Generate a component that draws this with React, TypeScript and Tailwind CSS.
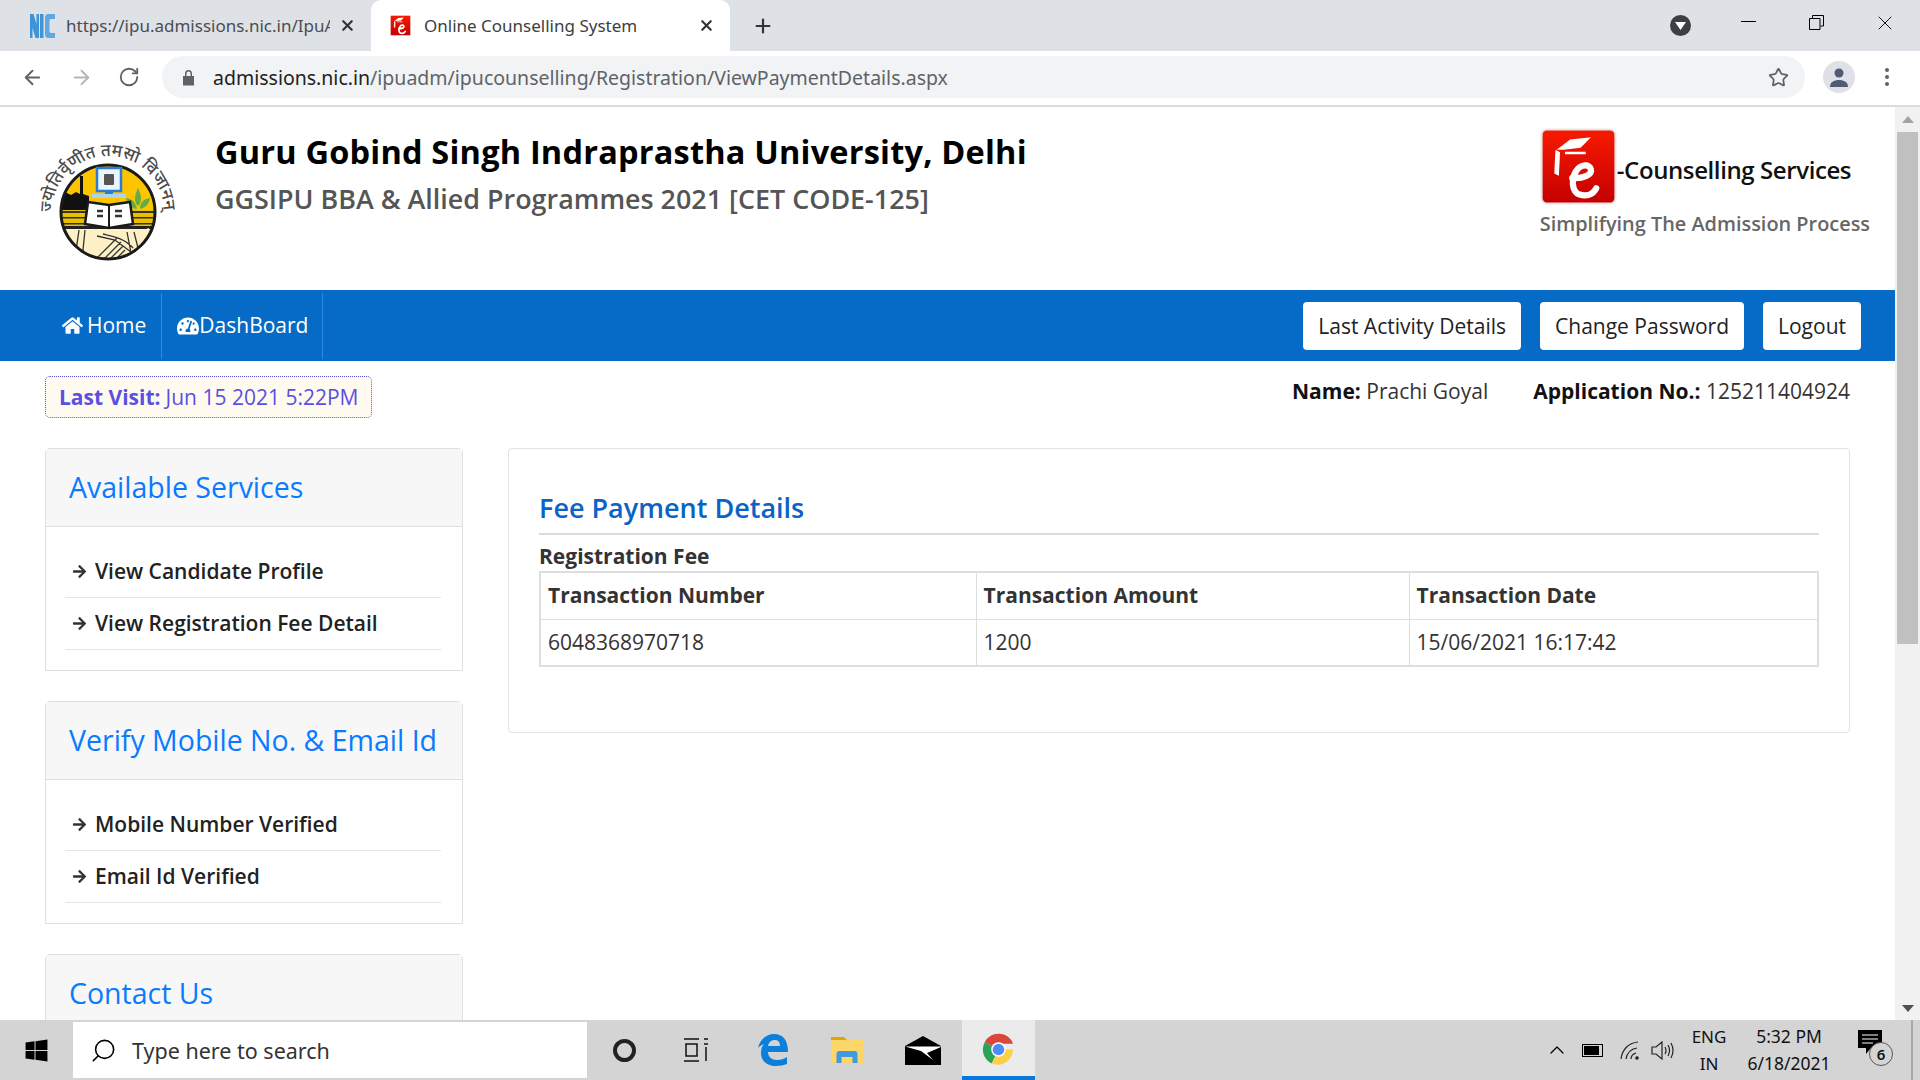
import { ArrowLeft, ArrowRight, ChevronUp, Plus, RotateCw, Search, Star, X } from "lucide-react"
import { FaArrowRight, FaHome, FaTachometerAlt, FaWindows } from "react-icons/fa"

const EmblemLogo = () => (
  <svg width="140" height="124" viewBox="0 0 140 124" className="shrink-0">
    <defs>
      <path id="motto" d="M 13 72 A 56 56 0 0 1 125 72" />
      <clipPath id="disc">
        <circle cx="69" cy="72" r="47" />
      </clipPath>
    </defs>
    <text fontSize="17" fontWeight="500" fill="#4a4a4a" fontFamily="'Noto Sans', sans-serif">
      <textPath href="#motto" textLength="174">
        ज्योतिर्वृणीत तमसो विजानन्
      </textPath>
    </text>
    <g clipPath="url(#disc)">
      <rect x="20" y="20" width="100" height="50" fill="#fcc500" />
      <rect x="20" y="70" width="100" height="54" fill="#fdf0c4" />
      <path d="M20 72V55l6-3 6 3 5-3 4 2V36h3v18l6 2v16z" fill="#111" />
      <path d="M20 70h100v18H20z" fill="#e8c000" />
      <path d="M20 71h100v2H20zM20 77h100v1.500H20zM20 83h100v1.500H20z" fill="#333" />
      <path d="M20 86h100v3H20z" fill="#222" />
      <path d="M99 66c-4-4-4-10 0-18 4 8 4 14 0 18z" fill="#63ad44" />
      <path d="M98 69c-7-1-10-5-11-11 7 1 10 5 11 11zM100 69c7-1 10-5 11-11-7 1-10 5-10 11z" fill="#63ad44" />
      <path d="M30 93l20-3 8 6 14-6 20 4 18-6v36H28z" fill="#fdf0c4" />
      <path d="M40 90l-4 28M46 90l-3 30M95 92l6 24M88 92l5 26M58 96l18 4 16 12M64 94c8 2 22 4 30 14M56 120l22-22M62 122l20-20M68 122l16-16M74 122l12-12" stroke="#333" strokeWidth="1.300" fill="none" />
    </g>
    <circle cx="69" cy="72" r="47" fill="none" stroke="#1a1a1a" strokeWidth="3" />
    <rect x="58" y="28" width="24" height="23" fill="#eaf4fc" stroke="#2c7dd0" strokeWidth="2.500" />
    <rect x="65" y="34" width="10" height="11" rx="1" fill="#555" />
    <path d="M66 51h8v3h-8z" fill="#2c7dd0" />
    <path d="M53 54h34v4H53z" fill="#a9d4f5" />
    <path d="M49 62l21 3 21-3 3 22-24 4-24-4z" fill="#fff" stroke="#1a1a1a" strokeWidth="2.500" />
    <path d="M70 65v23" stroke="#1a1a1a" strokeWidth="2" />
    <path d="M58 71h6M58 76h6M76 71h7M76 76h7" stroke="#333" strokeWidth="2.500" />
  </svg>
)

const ELogo = ({ size }: { size: number }) => (
  <svg width={size} height={size} viewBox="0 0 74 74" className="shrink-0">
    <defs>
      <linearGradient id={`red${size}`} x1="0" y1="0" x2="0" y2="1">
        <stop offset="0" stopColor="#f81a00" />
        <stop offset="1" stopColor="#c40000" />
      </linearGradient>
    </defs>
    <rect x="1.500" y="1.500" width="71" height="71" rx="5" fill={`url(#red${size})`} stroke="#e6e6e6" strokeWidth="2" />
    <path d="M16 21 29 11l20-2-10 10-16 2z" fill="#fff" />
    <path d="M16 23l2 1-1 20-2-1zM24 24h20" stroke="#fff" strokeWidth="2.500" fill="#fff" />
    <path d="M31 48c10 1 19-3 18-8-1-6-10-5-14 1-5 7-5 20 3 23 7 2 13 0 16-6" stroke="#fff" strokeWidth="6" fill="none" strokeLinecap="round" />
  </svg>
)

const NicIcon = () => (
  <svg width="25" height="24" viewBox="0 0 25 24" className="shrink-0 blur-[0.5px]">
    <path d="M0 0h3.500l3 10V0H9v24H5.500l-3-10v10H0zM10 0h3.500v24H10z" fill="#3f93d8" />
    <path d="M25 5V0h-6c-3.500 0-4 2-4 5v14c0 3 .5 5 4 5h6v-5h-4c-1 0-1.500-1-1.500-2V7c0-1 .5-2 1.500-2z" fill="#5fa9e2" />
  </svg>
)

const EdgeIcon = () => (
  <svg width="30" height="32" viewBox="0 0 30 32">
    <path
      fillRule="evenodd"
      d="M0 14C2 5 9 0 16 0c9 0 14 6 14 18H10c0 5 4 8 9 8 4 0 7-1 10-3v7c-3 1-7 2-11 2-9 0-15-5-15-13 0-4 1-7 3-9-3 1-5 3-6 4zM10 12h12c0-4-2-6-5-6-4 0-6 2-7 6z"
      fill="#0a7fdc"
    />
  </svg>
)

const ChromeIcon = () => (
  <svg width="33" height="33" viewBox="0 0 34 34">
    <path d="M17 17 2.800 9.500A16 16 0 0 1 32 11H17z" fill="#d9483b" />
    <path d="M17 17 10 31.500A16 16 0 0 1 2.800 9.500z" fill="#2aa25a" />
    <path d="M17 17h15a16 16 0 0 1-22 14.500z" fill="#fbcf46" />
    <circle cx="17" cy="17" r="7.500" fill="#fff" />
    <circle cx="17" cy="17" r="6" fill="#4d8cf5" />
  </svg>
)

const FolderIcon = () => (
  <svg width="32" height="26" viewBox="0 0 32 26">
    <path d="M0 0h13l3 3v3H0z" fill="#e2a400" />
    <path d="M0 3h32v23H0z" fill="#fcd56b" />
    <path d="M5.500 26V17q0-3 3-3h15q3 0 3 3v9h-5v-6h-11v6z" fill="#3f9ae0" />
  </svg>
)

const MailIcon = () => (
  <svg width="36" height="29" viewBox="0 0 36 29">
    <path d="M0 10 18 0l18 10v19H0z" fill="#000" />
    <path d="M0 10.500h36v.5L22 17l6 7-12-9z" fill="#fff" />
  </svg>
)

const ServiceCard = ({ title, items }: { title: string; items: string[] }) => (
  <div className="rounded-t-[5px] border border-[#dfdfdf] bg-white">
    <div className="flex h-[78px] items-center border-b border-[#dfdfdf] bg-[#f7f7f7] pl-[23px] text-[28.500px] text-[#0a7bff]">
      {title}
    </div>
    {items.length > 0 && (
      <ul className="pl-[19px] pr-[21px] pb-[20px] pt-[19px]">
        {items.map((item) => (
          <li key={item} className="flex h-[52px] items-center gap-[8px] border-b border-[#e4e4e4] pl-[7px] text-[21px] font-semibold text-[#222]">
            <FaArrowRight className="text-[15px] text-[#333]" />
            {item}
          </li>
        ))}
      </ul>
    )}
  </div>
)

const Cell = ({ children, head }: { children: string; head?: boolean }) => {
  const Tag = head ? "th" : "td"
  return (
    <Tag className={`border border-[#dedede] px-[7px] text-left text-[21px] text-[#333] ${head ? "font-bold" : "font-normal"}`}>
      {children}
    </Tag>
  )
}

const NavButton = ({ label }: { label: string }) => (
  <button className="flex h-[48px] items-center rounded-[4px] bg-white px-[15px] pt-[2px] text-[21px] text-[#222]">{label}</button>
)

export default function App() {
  return (
    <div className="flex h-screen flex-col overflow-hidden bg-white font-['Open_Sans',sans-serif]">
      {/* Browser tabs */}
      <div className="flex h-[51px] shrink-0 items-end bg-[#dee1e6] font-['Noto_Sans',sans-serif] text-[17px] text-[#3c4043]">
        <div className="flex h-[51px] w-[371px] items-center pl-[30px]">
          <NicIcon />
          <span className="ml-[11px] w-[264px] overflow-hidden whitespace-nowrap text-[#4a4d51]">https://ipu.admissions.nic.in/IpuA</span>
          <X size={17} strokeWidth={3} className="ml-[9px] text-[#333]" />
        </div>
        <div className="flex h-[51px] w-[359px] items-center rounded-t-[10px] bg-white pl-[19px]">
          <ELogo size={21} />
          <span className="ml-[13px] w-[274px]">Online Counselling System</span>
          <X size={17} strokeWidth={3} className="text-[#333]" />
        </div>
        <div className="flex h-[51px] items-center pl-[22px]">
          <Plus size={22} strokeWidth={2.4} className="text-[#333]" />
        </div>
        <div className="flex h-[51px] flex-1 items-center justify-end pr-[23px]">
          <div className="flex h-[21px] w-[21px] items-center justify-center rounded-full bg-[#3c4043]">
            <svg width="11" height="8" viewBox="0 0 11 8"><path d="M0 0h11L5.500 8z" fill="#fff" /></svg>
          </div>
          <div className="ml-[50px] h-[1.500px] w-[15px] -translate-y-[4px] bg-black" />
          <svg width="15" height="15" viewBox="0 0 15 15" className="ml-[53px] -translate-y-[3px]" fill="none" stroke="#000">
            <path d="M.5 3.500h10.500v11H.5zM3.500 3.500V.5h11v10.500h-3" />
          </svg>
          <X size={24} strokeWidth={0.9} className="ml-[49px] -translate-y-[3px] text-black" />
        </div>
      </div>

      {/* Address bar */}
      <div className="flex h-[56px] shrink-0 items-center border-b-2 border-[#dadce0] bg-white pb-[2px] pl-[21px]">
        <ArrowLeft size={23} strokeWidth={2} className="text-[#5f6368]" />
        <ArrowRight size={23} strokeWidth={2} className="ml-[26px] text-[#b4b6b9]" />
        <RotateCw size={22} strokeWidth={2} className="ml-[25px] text-[#5f6368]" />
        <div className="ml-[22px] flex h-[42px] flex-1 items-center rounded-full bg-[#f1f3f4] pl-[20px] pr-[16px] font-['Noto_Sans',sans-serif] text-[19.500px] text-[#5f6368]">
          <svg width="13" height="17" viewBox="0 0 13 17" fill="#5f6368" className="shrink-0">
            <path d="M1 7h11v9.500H1zM3 7V4.500a3.500 3.500 0 0 1 7 0V7H8.500V4.500a2 2 0 0 0-4 0V7z" />
          </svg>
          <span className="ml-[18px] flex-1 whitespace-nowrap pt-[2px]">
            <span className="text-[#202124]">admissions.nic.in</span>/ipuadm/ipucounselling/Registration/ViewPaymentDetails.aspx
          </span>
          <Star size={21} strokeWidth={2} className="text-[#5f6368]" />
        </div>
        <div className="ml-[18px] flex h-[32px] w-[32px] items-center justify-center rounded-full bg-[#dfe1e6]">
          <svg width="20" height="19" viewBox="0 0 20 19" fill="#4f5b73">
            <circle cx="10" cy="5" r="4.500" />
            <path d="M1 19c0-5 4-7 9-7s9 2 9 7z" />
          </svg>
        </div>
        <div className="ml-[30px] mr-[31px] flex flex-col gap-[3px]">
          <div className="h-[4px] w-[4px] rounded-full bg-[#5f6368]" />
          <div className="h-[4px] w-[4px] rounded-full bg-[#5f6368]" />
          <div className="h-[4px] w-[4px] rounded-full bg-[#5f6368]" />
        </div>
      </div>

      {/* Page + scrollbar */}
      <div className="flex min-h-0 flex-1">
        <div className="min-w-0 flex-1 overflow-hidden">
          <header className="flex h-[183px] justify-between pr-[25px]">
            <div className="flex pl-[39px] pt-[33px]">
              <EmblemLogo />
              <div className="ml-[36px] -mt-[19px] pt-[3px]">
                <h1 className="mt-[3px] whitespace-nowrap text-[32.500px] font-bold leading-[50px] tracking-[0.2px] text-black">
                  Guru Gobind Singh Indraprastha University, Delhi
                </h1>
                <h2 className="whitespace-nowrap text-[26.900px] font-semibold leading-[44px] text-[#555]">
                  GGSIPU BBA &amp; Allied Programmes 2021 [CET CODE-125]
                </h2>
              </div>
            </div>
            <div className="pt-[21px]">
              <div className="flex items-center">
                <ELogo size={77} />
                <span className="whitespace-nowrap pt-[6px] text-[24px] font-semibold tracking-[-0.4px] text-[#111]">-Counselling Services</span>
              </div>
              <div className="mt-[4px] whitespace-nowrap text-[19.900px] font-semibold text-[#666]">Simplifying The Admission Process</div>
            </div>
          </header>

          <nav className="flex h-[71px] items-center justify-between bg-[#066bc6] pl-[45px] pr-[34px] text-white">
            <div className="flex h-[66px] text-[21px]">
              <a className="flex items-center gap-[4px] border-r border-[#2a8be6] pl-[17px] pr-[15px]">
                <FaHome className="text-[21px]" /> Home
              </a>
              <a className="flex items-center border-r border-[#2a8be6] pl-[15px] pr-[14px]">
                <FaTachometerAlt className="text-[22px]" />
                DashBoard
              </a>
            </div>
            <div className="flex gap-[19px]">
              <NavButton label="Last Activity Details" />
              <NavButton label="Change Password" />
              <NavButton label="Logout" />
            </div>
          </nav>

          <div className="px-[45px]">
            <div className="flex items-start justify-between pt-[15px]">
              <div className="flex h-[42px] items-center rounded-[5px] border border-dotted border-[#5a50d8] bg-[#fffaf0] px-[13px] pt-[1px] text-[21px] text-[#5a50e0]">
                <b className="mr-[5px] font-bold">Last Visit:</b> Jun 15 2021 5:22PM
              </div>
              <div className="flex gap-[45px] text-[21px] leading-[30px] text-[#333]">
                <span>
                  <b className="font-bold text-[#111]">Name:</b> Prachi Goyal
                </span>
                <span>
                  <b className="font-bold text-[#111]">Application No.:</b> 125211404924
                </span>
              </div>
            </div>

            <div className="mt-[30px] flex gap-[45px]">
              <aside className="flex w-[418px] shrink-0 flex-col gap-[30px]">
                <ServiceCard title="Available Services" items={["View Candidate Profile", "View Registration Fee Detail"]} />
                <ServiceCard title="Verify Mobile No. & Email Id" items={["Mobile Number Verified", "Email Id Verified"]} />
                <ServiceCard title="Contact Us" items={[]} />
              </aside>

              <main className="h-[285px] flex-1 rounded-[4px] border border-[#e2e2e2] px-[30px] pt-[39px]">
                <h3 className="border-b-2 border-[#dcdcdc] pb-[5px] text-[27px] font-semibold leading-[40px] text-[#0b63c5]">Fee Payment Details</h3>
                <div className="mt-[7px] text-[21px] font-bold leading-[29px] text-[#333]">Registration Fee</div>
                <table className="w-full table-fixed border-collapse border-2 border-[#dedede]">
                  <colgroup>
                    <col className="w-[436px]" />
                    <col className="w-[433px]" />
                    <col />
                  </colgroup>
                  <thead>
                    <tr className="h-[47px]">
                      <Cell head>Transaction Number</Cell>
                      <Cell head>Transaction Amount</Cell>
                      <Cell head>Transaction Date</Cell>
                    </tr>
                  </thead>
                  <tbody>
                    <tr className="h-[47px]">
                      <Cell>6048368970718</Cell>
                      <Cell>1200</Cell>
                      <Cell>15/06/2021 16:17:42</Cell>
                    </tr>
                  </tbody>
                </table>
              </main>
            </div>
          </div>
        </div>

        {/* Scrollbar */}
        <div className="flex w-[25px] shrink-0 flex-col items-center bg-[#f1f1f1]">
          <svg width="12" height="7" viewBox="0 0 12 7" className="mt-[9px]"><path d="M6 0l6 7H0z" fill="#a3a3a3" /></svg>
          <div className="mt-[9px] h-[512px] w-[21px] bg-[#c0c0c0]" />
          <svg width="12" height="7" viewBox="0 0 12 7" className="mt-auto mb-[8px]"><path d="M0 0h12L6 7z" fill="#505050" /></svg>
        </div>
      </div>

      {/* Windows taskbar */}
      <div className="flex h-[60px] shrink-0 items-center bg-[#d4d4d4] font-['Noto_Sans',sans-serif] text-[#111]">
        <div className="flex w-[73px] justify-center">
          <FaWindows className="text-[25px] text-black" />
        </div>
        <div className="flex h-[56px] w-[514px] items-center bg-white pl-[17px] text-[21.500px] text-[#333]">
          <Search size={27} strokeWidth={1.4} className="-scale-x-100 text-black" />
          <span className="ml-[15px] pt-[2px]">Type here to search</span>
        </div>
        <div className="flex h-[60px] w-[74px] items-center justify-center">
          <div className="h-[23px] w-[23px] rounded-full border-[4px] border-[#222]" />
        </div>
        <div className="ml-[13px] flex h-[60px] w-[44px] items-center justify-center">
          <svg width="26" height="24" viewBox="0 0 26 24" fill="none" stroke="#111" strokeWidth="1.500">
            <path d="M1 1h15M1 23h15M3 6h11v12H3zM21 1h4M21 6h4M23 9v14" />
          </svg>
        </div>
        <div className="ml-[31px] flex w-[48px] justify-center">
          <EdgeIcon />
        </div>
        <div className="ml-[25px] flex w-[50px] justify-center">
          <FolderIcon />
        </div>
        <div className="ml-[26px] flex w-[50px] justify-center">
          <MailIcon />
        </div>
        <div className="ml-[14px] flex h-[60px] w-[73px] items-center justify-center border-b-[4px] border-[#0a78d7] bg-[#ebebeb] pt-[2px]">
          <ChromeIcon />
        </div>
        <div className="ml-[510px] flex items-center">
          <ChevronUp size={24} strokeWidth={1.3} className="text-black" />
          <div className="ml-[13px] flex h-[13px] w-[21px] items-center border border-black p-[1px]">
            <div className="h-full w-[15px] bg-black" />
          </div>
          <svg width="20" height="19" viewBox="0 0 20 19" fill="none" stroke="#222" strokeWidth="1.200" className="ml-[17px]">
            <path d="M1 18C2 9 8 2 18 1M6 18c1-6 5-10 11-11M11 18c0-3 2-5 5-6" />
            <circle cx="17" cy="17" r="1.200" fill="#222" />
          </svg>
          <svg width="23" height="19" viewBox="0 0 23 19" fill="none" stroke="#222" strokeWidth="1.200" className="ml-[11px]">
            <path d="M1 6h4l6-5v17l-6-5H1zM14 6q2 3.500 0 7M17 4q3 5.500 0 11M20 2q4 7.500 0 15" />
          </svg>
        </div>
        <div className="ml-[17px] w-[36px] text-center text-[17px] leading-[27px]">
          <div>ENG</div>
          <div>IN</div>
        </div>
        <div className="ml-[20px] w-[84px] text-center text-[17.500px] leading-[27px]">
          <div>5:32 PM</div>
          <div className="whitespace-nowrap">6/18/2021</div>
        </div>
        <div className="relative ml-[27px] h-[40px] w-[34px] -translate-y-[2px]">
          <svg width="24" height="24" viewBox="0 0 24 24" className="mt-[2px]">
            <path d="M0 0h24v18H13l-5 6v-6H0z" fill="#000" />
            <path d="M4 5h16M4 9h16M4 13h11" stroke="#fff" strokeWidth="1.200" />
          </svg>
          <div className="absolute left-[11px] top-[14px] flex h-[24px] w-[24px] items-center justify-center rounded-full border border-[#555] bg-[#d4d4d4] text-[15px] font-semibold">
            6
          </div>
        </div>
        <div className="ml-[19px] h-[60px] w-[2px] bg-[#a8a8a8]" />
      </div>
    </div>
  )
}
